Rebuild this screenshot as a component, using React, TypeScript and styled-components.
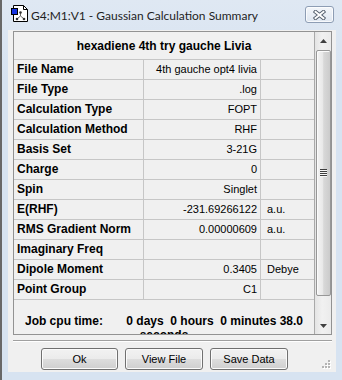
import React from "react";
import styled, { createGlobalStyle } from "styled-components";

const Global = createGlobalStyle`
  html, body { margin: 0; padding: 0; }
  body { width: 342px; height: 380px; overflow: hidden; background: #d8e4f2; }
  * { box-sizing: border-box; }
`;

const Window = styled.div`
  width: 342px;
  height: 380px;
  display: flex;
  flex-direction: column;
  background: linear-gradient(#dfe8f3, #d7e3f1 80px, #d7e3f1);
  border-left: 2px solid #686868;
`;

const TitleBar = styled.div`
  height: 30px;
  flex: none;
  display: flex;
  align-items: center;
  padding-left: 9px;
  padding-right: 8px;
`;

const TitleIcon = styled.svg`
  flex: none;
  align-self: flex-start;
  margin-top: 5px;
`;

const TitleText = styled.div`
  margin-left: 3px;
  font: 12px Lato, "Open Sans", sans-serif;
  color: #1e1e1e;
  white-space: nowrap;
`;

const CloseButton = styled.div`
  margin-left: auto;
  align-self: flex-start;
  margin-top: 6px;
  width: 29px;
  height: 17px;
  border: 1px solid #8d9db4;
  border-radius: 3px;
  background: linear-gradient(#f3f6fa, #dfe7f1);
  box-shadow: inset 0 0 0 1px rgba(255, 255, 255, 0.75);
  display: flex;
  align-items: center;
  justify-content: center;
`;

const Client = styled.div`
  flex: 1;
  margin: 0 6px 8px 6px;
  background: #f0f0f0;
  display: flex;
  flex-direction: column;
  position: relative;
  padding-left: 5px;
  padding-top: 1px;
`;

const Panel = styled.div`
  width: 319px;
  height: 304px;
  border: 1px solid #929292;
  display: flex;
  background: #f0f0f0;
`;

const TableArea = styled.div`
  width: 300px;
  flex: none;
  overflow: hidden;
  font-family: "Liberation Sans", Arial, sans-serif;
  color: #000;
`;

const Header = styled.div`
  height: 28px;
  border-bottom: 1px solid #c6c6c6;
  display: flex;
  align-items: center;
  justify-content: center;
  font-weight: bold;
  font-size: 12px;
  padding-top: 1px;
`;

const Grid = styled.div`
  display: grid;
  grid-template-columns: 130px 117px 53px;
`;

const Cell = styled.div<{ $kind: "label" | "value" | "unit" }>`
  height: 20px;
  line-height: 19px;
  border-bottom: 1px solid #c6c6c6;
  border-right: ${(p) => (p.$kind === "unit" ? "none" : "1px solid #c6c6c6")};
  white-space: nowrap;
  overflow: hidden;
  font-size: ${(p) => (p.$kind === "label" ? "12px" : "11px")};
  font-weight: ${(p) => (p.$kind === "label" ? "bold" : "normal")};
  text-align: ${(p) => (p.$kind === "value" ? "right" : "left")};
  padding: ${(p) =>
    p.$kind === "label" ? "0 0 0 3px" : p.$kind === "value" ? "0 3px 0 0" : "0 0 0 6px"};
`;

const CpuTime = styled.div`
  padding: 14px 4px 0;
  text-align: center;
  white-space: pre-wrap;
  font-weight: bold;
  font-size: 12px;
  line-height: 14px;
`;

const ScrollBar = styled.div`
  width: 17px;
  flex: none;
  display: flex;
  flex-direction: column;
  border-left: 1px solid #a9a9a9;
  background: linear-gradient(to right, #e4e4e4, #f1f1f1 45%, #ebebeb);
`;

const ArrowButton = styled.div`
  height: 17px;
  flex: none;
  display: flex;
  align-items: center;
  justify-content: center;
`;

const Track = styled.div`
  flex: 1;
  padding-top: 1px;
  padding-left: 1px;
`;

const Thumb = styled.div<{ $h: number }>`
  height: ${(p) => p.$h}px;
  border: 1px solid #979797;
  border-radius: 2px;
  background: linear-gradient(to right, #f4f4f4, #e9e9e9 42%, #d8d8d8 52%, #cbcbcb);
  box-shadow: inset 1px 1px 0 #fbfbfb;
  display: flex;
  align-items: center;
  justify-content: center;
`;

const Separator = styled.div`
  margin-top: 5px;
  width: 319px;
  height: 2px;
  border-top: 1px solid #a0a0a0;
  border-bottom: 1px solid #ffffff;
`;

const Footer = styled.div`
  margin-top: 6px;
  padding-left: 28px;
  display: flex;
  gap: 7px;
`;

const Button = styled.button<{ $w: number }>`
  width: ${(p) => p.$w}px;
  height: 22px;
  padding: 0;
  border: 1px solid #707070;
  border-radius: 3px;
  background: linear-gradient(#f2f2f2 0%, #ebebeb 50%, #dddddd 51%, #cfcfcf 100%);
  box-shadow: inset 0 0 0 1px #fbfbfb;
  font: 11px "Liberation Sans", Arial, sans-serif;
  color: #000;
`;

const SizeGrip = styled.svg`
  position: absolute;
  right: 5px;
  bottom: 3px;
`;

const rows: [string, string, string][] = [
  ["File Name", "4th gauche opt4 livia", ""],
  ["File Type", ".log", ""],
  ["Calculation Type", "FOPT", ""],
  ["Calculation Method", "RHF", ""],
  ["Basis Set", "3-21G", ""],
  ["Charge", "0", ""],
  ["Spin", "Singlet", ""],
  ["E(RHF)", "-231.69266122", "a.u."],
  ["RMS Gradient Norm", "0.00000609", "a.u."],
  ["Imaginary Freq", "", ""],
  ["Dipole Moment", "0.3405", "Debye"],
  ["Point Group", "C1", ""],
];

const gripDots: [number, number][] = [
  [9, 1],
  [6, 4],
  [9, 4],
  [3, 7],
  [6, 7],
  [9, 7],
];

export default function App() {
  return (
    <>
      <Global />
      <Window>
        <TitleBar>
          <TitleIcon width="17" height="17" viewBox="0 0 17 17">
            <path d="M2.5 0.5H12.5L16.5 4.5V16.5H2.5Z" fill="#fff" stroke="#000" />
            <path d="M12.5 0.5V4.5H16.5" fill="none" stroke="#000" />
            <path d="M9.5 8V11M9.5 11L6.5 13.5M9.5 11L12.5 13.5" stroke="#666" strokeWidth="1" fill="none" />
            <circle cx="9.5" cy="7.5" r="1.3" fill="#333" />
            <circle cx="6" cy="14" r="1.3" fill="#333" />
            <circle cx="13" cy="14" r="1.3" fill="#333" />
            <rect x="0.5" y="3.5" width="6" height="6" fill="#1533e0" stroke="#000" />
          </TitleIcon>
          <TitleText>G4:M1:V1 - Gaussian Calculation Summary</TitleText>
          <CloseButton>
            <svg width="13" height="10" viewBox="0 0 13 10">
              <path d="M2.5 1.8L10.5 8.2M10.5 1.8L2.5 8.2" stroke="#55606e" strokeWidth="3.8" strokeLinecap="square" />
              <path d="M2.5 1.8L10.5 8.2M10.5 1.8L2.5 8.2" stroke="#ffffff" strokeWidth="1.9" strokeLinecap="square" />
            </svg>
          </CloseButton>
        </TitleBar>
        <Client>
          <Panel>
            <TableArea>
              <Header>hexadiene 4th try gauche Livia</Header>
              <Grid>
                {rows.map(([label, value, unit]) => (
                  <React.Fragment key={label}>
                    <Cell $kind="label">{label}</Cell>
                    <Cell $kind="value">{value}</Cell>
                    <Cell $kind="unit">{unit}</Cell>
                  </React.Fragment>
                ))}
              </Grid>
              <CpuTime>{"Job cpu time:       0 days  0 hours  0 minutes 38.0 seconds"}</CpuTime>
            </TableArea>
            <ScrollBar>
              <ArrowButton>
                <svg width="7" height="4" viewBox="0 0 7 4">
                  <path d="M0 4L3.5 0L7 4Z" fill="#404040" />
                </svg>
              </ArrowButton>
              <Track>
                <Thumb $h={246}>
                  <svg width="7" height="8" viewBox="0 0 7 8">
                    {[0, 2, 4, 6].map((y) => (
                      <React.Fragment key={y}>
                        <rect x="0" y={y} width="7" height="1" fill="#3e3e3e" />
                        <rect x="0" y={y + 1} width="7" height="1" fill="#f6f6f6" />
                      </React.Fragment>
                    ))}
                  </svg>
                </Thumb>
              </Track>
              <ArrowButton>
                <svg width="7" height="4" viewBox="0 0 7 4">
                  <path d="M0 0L3.5 4L7 0Z" fill="#404040" />
                </svg>
              </ArrowButton>
            </ScrollBar>
          </Panel>
          <Separator />
          <Footer>
            <Button $w={77}>Ok</Button>
            <Button $w={78}>View File</Button>
            <Button $w={78}>Save Data</Button>
          </Footer>
          <SizeGrip width="12" height="10" viewBox="0 0 12 10">
            {gripDots.map(([x, y]) => (
              <React.Fragment key={`${x}-${y}`}>
                <rect x={x + 1} y={y + 1} width="2" height="2" fill="#ffffff" />
                <rect x={x} y={y} width="2" height="2" fill="#b4b4b4" />
              </React.Fragment>
            ))}
          </SizeGrip>
        </Client>
      </Window>
    </>
  );
}
